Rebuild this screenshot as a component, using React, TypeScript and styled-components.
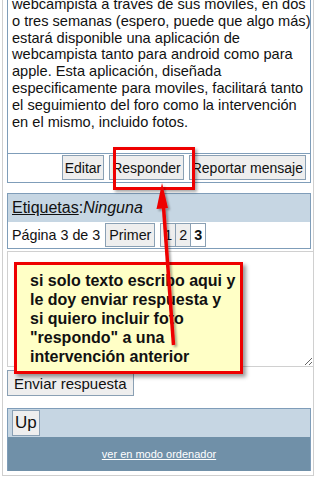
import styled, { createGlobalStyle } from "styled-components";

const GlobalStyle = createGlobalStyle`
  html, body {
    margin: 0;
    padding: 0;
    background: #ffffff;
    font-family: "Liberation Sans", Arial, sans-serif;
    overflow: hidden;
  }
`;

const postLines = [
  "webcampista a traves de sus moviles, en dos",
  "o tres semanas (espero, puede que algo más)",
  "estará disponible una aplicación de",
  "webcampista tanto para android como para",
  "apple. Esta aplicación, diseñada",
  "especificamente para moviles, facilitará tanto",
  "el seguimiento del foro como la intervención",
  "en el mismo, incluido fotos.",
];

const noteLines = [
  "si solo texto escribo aqui y",
  "le doy enviar respuesta y",
  "si quiero incluir foto",
  "\"respondo\" a una",
  "intervención anterior",
];

const App = () => {
  return (
    <Page>
      <GlobalStyle />
      <Frame>
        <PostBox>
          <PostText>
            {postLines.map((line) => (
              <div key={line}>{line}</div>
            ))}
          </PostText>
          <PostActions>
            <ActionButton>Editar</ActionButton>
            <ActionButton>Responder</ActionButton>
            <ActionButton>Reportar mensaje</ActionButton>
          </PostActions>
        </PostBox>

        <TagsBox>
          <TagsHeader>
            <TagsLabel>Etiquetas</TagsLabel>:<TagsValue>Ninguna</TagsValue>
          </TagsHeader>
          <PagerRow>
            <PagerText>Página 3 de 3</PagerText>
            <PagerButton>Primer</PagerButton>
            <PageLinks>
              <PageNum>1</PageNum>
              <PageNum>2</PageNum>
              <PageNum current>3</PageNum>
            </PageLinks>
          </PagerRow>
        </TagsBox>

        <ReplyArea />
        <SendButton>Enviar respuesta</SendButton>

        <BottomBox>
          <UpBar>
            <UpButton>Up</UpButton>
          </UpBar>
          <Footer>
            <FooterLink href="#">ver en modo ordenador</FooterLink>
          </Footer>
        </BottomBox>
      </Frame>

      <Highlight />
      <Note>
        {noteLines.map((line) => (
          <div key={line}>{line}</div>
        ))}
      </Note>
      <Arrow width="317" height="478" viewBox="0 0 317 478">
        <defs>
          <filter id="arrowShadow" x="-50%" y="-10%" width="200%" height="120%">
            <feDropShadow dx="2" dy="2" stdDeviation="1.2" floodColor="#000" floodOpacity="0.35" />
          </filter>
        </defs>
        <g filter="url(#arrowShadow)">
          <line x1="173.5" y1="345" x2="163" y2="200" stroke="#ee0000" strokeWidth="3.5" />
          <polygon points="162,183 156.5,209 168,208" fill="#ee0000" />
        </g>
      </Arrow>
    </Page>
  );
};

export default App;

const Page = styled.div`
  position: relative;
  width: 317px;
  height: 478px;
  overflow: hidden;
  background: #ffffff;
`;

const Frame = styled.div`
  box-sizing: border-box;
  width: 312px;
  margin-left: 2px;
  padding: 0 2px 4px 4px;
  border-left: 1px solid #cfcfcf;
  border-right: 1px solid #cfcfcf;
  border-bottom: 1px solid #cfcfcf;
  display: flex;
  flex-direction: column;
  align-items: stretch;
`;

const PostBox = styled.div`
  border: 1px solid #7f9db9;
  border-top: none;
  display: flex;
  flex-direction: column;
`;

const PostText = styled.div`
  margin-top: -4px;
  padding: 0 4px 23px 4px;
  font-size: 14.6px;
  line-height: 16.8px;
  color: #111111;
  white-space: nowrap;
  overflow: hidden;
`;

const PostActions = styled.div`
  display: flex;
  justify-content: flex-end;
  gap: 5px;
  padding: 1px 4px 2px;
  border-top: 1px solid #7f9db9;
`;

const ActionButton = styled.span`
  box-sizing: border-box;
  height: 25px;
  display: inline-flex;
  align-items: center;
  padding: 0 2px;
  background: #eeeeee;
  border: 1px solid #8aa0b4;
  font-size: 14px;
  color: #111111;
`;

const TagsBox = styled.div`
  margin-top: 10px;
  border: 1px solid #7f9db9;
`;

const TagsHeader = styled.div`
  height: 28px;
  display: flex;
  align-items: center;
  padding: 0 4px;
  background: #c6d6e3;
  font-size: 16px;
  color: #111111;
`;

const TagsLabel = styled.span`
  text-decoration: underline;
`;

const TagsValue = styled.span`
  font-style: italic;
`;

const PagerRow = styled.div`
  display: flex;
  align-items: center;
  gap: 5px;
  padding: 1px 4px;
  font-size: 14.3px;
  color: #111111;
`;

const PagerText = styled.span``;

const PagerButton = styled.span`
  box-sizing: border-box;
  height: 24px;
  display: inline-flex;
  align-items: center;
  padding: 0 3px;
  background: #eeeeee;
  border: 1px solid #8aa0b4;
`;

const PageLinks = styled.span`
  display: inline-flex;
`;

const PageNum = styled.span<{ current?: boolean }>`
  box-sizing: border-box;
  height: 24px;
  display: inline-flex;
  align-items: center;
  padding: 0 3px;
  margin-right: -1px;
  background: ${({ current }) => (current ? "#ffffff" : "#eeeeee")};
  border: 1px solid #8aa0b4;
  font-weight: ${({ current }) => (current ? 700 : 400)};
`;

const ReplyArea = styled.textarea`
  box-sizing: border-box;
  display: block;
  width: calc(100% + 3px);
  height: 116px;
  margin: 2px 0 0;
  border: 1px solid #d0d0d0;
  resize: both;
  font-family: inherit;
`;

const SendButton = styled.span`
  box-sizing: border-box;
  align-self: flex-start;
  height: 26px;
  margin-top: 3px;
  display: inline-flex;
  align-items: center;
  padding: 0 6px;
  background: #eeeeee;
  border: 1px solid #8aa0b4;
  font-size: 15px;
  color: #111111;
`;

const BottomBox = styled.div`
  margin-top: 12px;
  border: 1px solid #7f9db9;
  border-bottom: none;
`;

const UpBar = styled.div`
  display: flex;
  padding: 1px 4px 1px;
  background: #c6d6e3;
`;

const UpButton = styled.span`
  box-sizing: border-box;
  height: 26px;
  display: inline-flex;
  align-items: center;
  padding: 0 2px;
  background: #eeeeee;
  border: 1px solid #8aa0b4;
  font-size: 17px;
  color: #111111;
`;

const Footer = styled.div`
  height: 34px;
  display: flex;
  align-items: center;
  justify-content: center;
  background: #7090a8;
`;

const FooterLink = styled.a`
  color: #ffffff;
  font-size: 11px;
  text-decoration: underline;
`;

const Highlight = styled.div`
  position: absolute;
  left: 113px;
  top: 147px;
  width: 82px;
  height: 43px;
  box-sizing: border-box;
  border: 3px solid #ee0000;
  box-shadow: 2px 2px 3px rgba(0, 0, 0, 0.35);
`;

const Note = styled.div`
  position: absolute;
  left: 14px;
  top: 262px;
  width: 229px;
  height: 112px;
  box-sizing: border-box;
  padding: 6px 0 0 13px;
  background: #ffffc6;
  border: 3px solid #ee0000;
  box-shadow: 3px 3px 4px rgba(0, 0, 0, 0.4);
  font-size: 16px;
  font-weight: 700;
  line-height: 19px;
  color: #111111;
  white-space: nowrap;
`;

const Arrow = styled.svg`
  position: absolute;
  left: 0;
  top: 0;
  pointer-events: none;
`;
